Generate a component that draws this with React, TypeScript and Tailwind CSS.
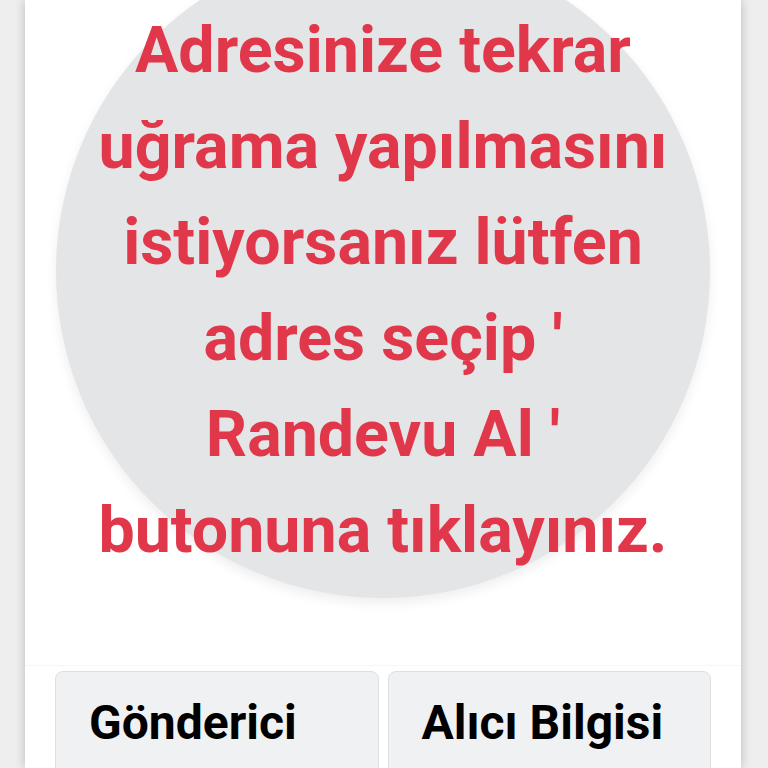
import React from "react";

const lines = [
  "Adresinize tekrar",
  "uğrama yapılmasını",
  "istiyorsanız lütfen",
  "adres seçip '",
  "Randevu Al '",
  "butonuna tıklayınız.",
];

export default function App() {
  return (
    <div
      className="h-[768px] w-[768px] overflow-hidden bg-[#eeeeee]"
      style={{ fontFamily: "Roboto, 'Liberation Sans', sans-serif" }}
    >
      <div className="ml-[25px] flex h-[768px] w-[716px] flex-col bg-white shadow-[0_0_10px_rgba(0,0,0,0.22)]">
        {/* Notice circle */}
        <div className="mx-auto -mt-[56px] h-[654px] w-[654px] shrink-0 rounded-full bg-[#e4e5e7] pt-[58px] text-center shadow-[0_5px_12px_rgba(0,0,0,0.07)]">
          {lines.map((l) => (
            <div
              key={l}
              className="whitespace-nowrap text-[64.5px] font-bold leading-[96px] text-[#e0384a]"
            >
              {l}
            </div>
          ))}
        </div>

        {/* Info tabs */}
        <div className="mt-[67px] border-t border-[#f6f6f6] pt-[5px]">
          <div className="mx-auto grid w-[656px] grid-cols-2 gap-[9px]">
            <div className="h-[140px] rounded-[8px] border border-[#dedfe1] bg-[#f0f1f3] pl-[33px] pt-[22px]">
              <span className="text-[48px] font-bold leading-[58px] text-black">Gönderici</span>
            </div>
            <div className="h-[140px] rounded-[8px] border border-[#dedfe1] bg-[#f0f1f3] pl-[33px] pt-[22px]">
              <span className="text-[48px] font-bold leading-[58px] text-black">Alıcı Bilgisi</span>
            </div>
          </div>
        </div>
      </div>
    </div>
  );
}
